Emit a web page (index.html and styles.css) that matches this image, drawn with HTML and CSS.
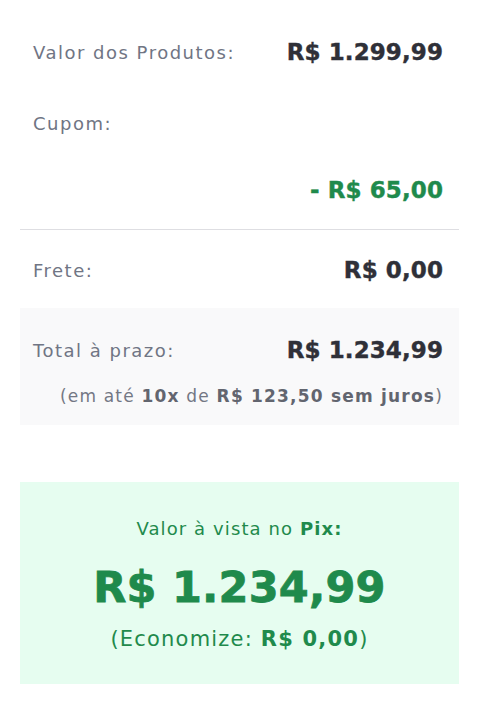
FILE: index.html
```html
<!DOCTYPE html>
<html lang="pt-BR">
<head>
<meta charset="utf-8">
<title>Resumo</title>
<link rel="stylesheet" href="styles.css">
</head>
<body>
<div class="summary">
  <div class="row row-first">
    <span class="label">Valor dos Produtos:</span>
    <span class="value">R$ 1.299,99</span>
  </div>
  <div class="row row-coupon">
    <span class="label">Cupom:</span>
  </div>
  <div class="row row-discount">
    <span class="value discount">- R$ 65,00</span>
  </div>
  <hr class="divider">
  <div class="row row-freight">
    <span class="label">Frete:</span>
    <span class="value">R$ 0,00</span>
  </div>
  <div class="total-box">
    <div class="row">
      <span class="label">Total à prazo:</span>
      <span class="value">R$ 1.234,99</span>
    </div>
    <p class="installments">(em até <b>10x</b> de <b>R$ 123,50 sem juros</b>)</p>
  </div>
  <div class="pix-box">
    <p class="pix-label">Valor à vista no <b>Pix:</b></p>
    <p class="pix-value">R$ 1.234,99</p>
    <p class="pix-save">(Economize: <b>R$ 0,00</b>)</p>
  </div>
</div>
</body>
</html>
```
FILE: styles.css
```css
html, body {
  margin: 0;
  padding: 0;
  background: #ffffff;
}
body {
  font-family: "DejaVu Sans", Inter, "Noto Sans", sans-serif;
}
.summary {
  width: 439px;
  margin: 0 0 0 20px;
  padding-top: 36px;
}
.row {
  display: flex;
  justify-content: space-between;
  align-items: center;
  height: 32px;
  padding: 0 16px 0 13px;
}
.row-coupon { margin-top: 39px; }
.row-discount { margin-top: 35px; justify-content: flex-end; }
.label {
  font-size: 18px;
  color: #707584;
  letter-spacing: 1.5px;
}
.value {
  font-size: 23px;
  font-weight: 700;
  color: #2f3038;
  letter-spacing: 0.1px;
  -webkit-text-stroke: 0.4px currentColor;
}
.value.discount { color: #1f8a4c; }
.divider {
  border: 0;
  border-top: 1px solid #dedee2;
  margin: 23px 0 0;
  height: 0;
}
.row-freight { margin-top: 24px; }
.total-box {
  margin-top: 22px;
  background: #f9f9fa;
  padding: 26px 0 17px;
}
.installments {
  margin: 18px 0 0;
  padding: 0 16px 0 13px;
  text-align: right;
  font-size: 17px;
  line-height: 24px;
  color: #737784;
  letter-spacing: 1.2px;
}
.installments b { color: #62656f; font-weight: 700; }
.pix-box {
  margin-top: 57px;
  background: #e6fdf0;
  padding: 35px 0 31px;
  text-align: center;
  color: #1f8a4c;
}
.pix-box p { margin: 0; }
.pix-label {
  font-size: 18px;
  line-height: 24px;
  letter-spacing: 1.1px;
}
.pix-label b { font-weight: 700; }
.pix-value {
  margin-top: 20px !important;
  font-size: 43px;
  line-height: 52px;
  font-weight: 700;
  letter-spacing: 0.2px;
  -webkit-text-stroke: 0.8px currentColor;
}
.pix-save {
  margin-top: 12px !important;
  font-size: 21px;
  line-height: 28px;
  letter-spacing: 1.2px;
}
.pix-save b { font-weight: 700; }
```
